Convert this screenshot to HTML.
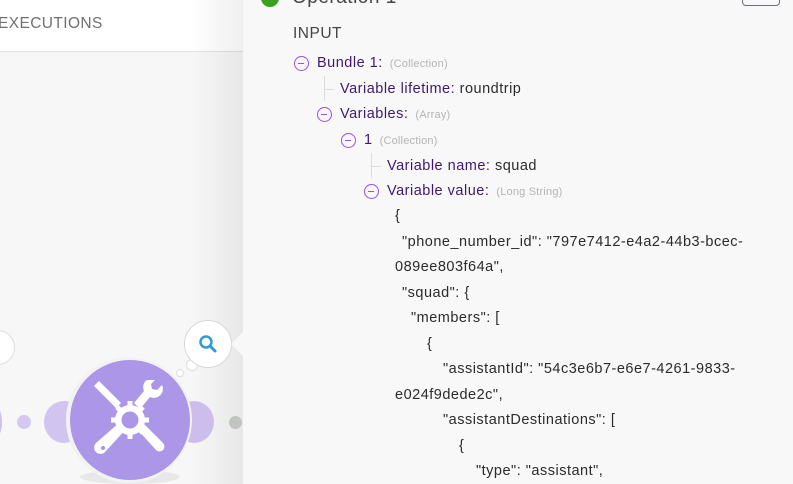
<!DOCTYPE html>
<html><head><meta charset="utf-8"><style>
*{margin:0;padding:0;box-sizing:border-box}
html,body{width:793px;height:484px;overflow:hidden}
body{position:relative;background:#f7f7f7;font-family:"Liberation Sans",sans-serif}
.hdr{position:absolute;left:0;top:0;width:260px;height:52px;background:#fff;border-bottom:1px solid #e2e2e2}
.hdr span{position:absolute;left:-2px;top:15px;font-size:15.5px;color:#707070;letter-spacing:.4px}
.shadow{position:absolute;left:190px;top:0;width:60px;height:484px;background:linear-gradient(to right,rgba(0,0,0,0),rgba(0,0,0,.07))}
.panel{position:absolute;left:243px;top:0;width:550px;height:484px;background:#f8f8f8}
.t{position:absolute;font-size:14.5px;letter-spacing:.5px;line-height:20px;color:#2b2b2b;white-space:nowrap}
.k{color:#3d1a6b}
.g{color:#b4b4b4;font-size:11px;letter-spacing:.2px;margin-left:7px}
.m{position:absolute;width:15px;height:15px;border:1.5px solid #9b4fe0;border-radius:50%}
.m:after{content:"";position:absolute;left:3px;top:5.5px;width:6px;height:1.5px;background:#9b4fe0}
.vl{position:absolute;width:1px;background:#ddd}
.hl{position:absolute;height:1px;background:#ddd}
</style></head><body>
<div class="hdr"><span>EXECUTIONS</span></div>
<div class="shadow"></div>
<div style="position:absolute;left:-20px;top:330px;width:35px;height:35px;border-radius:50%;background:#fff;border:1px solid #ddd"></div>
<div style="position:absolute;left:-20px;top:402px;width:22px;height:40px;border-radius:50%;background:#cfc0ee"></div>
<div style="position:absolute;left:17px;top:415px;width:14px;height:14px;border-radius:50%;background:#d5c8f0"></div>
<div style="position:absolute;left:44px;top:401px;width:40px;height:42px;border-radius:50%;background:#d2c4f0"></div>
<div style="position:absolute;left:174px;top:401px;width:40px;height:42px;border-radius:50%;background:#cdbdec"></div>
<div style="position:absolute;left:229px;top:416px;width:13px;height:13px;border-radius:50%;background:#c2c4c2"></div>
<div style="position:absolute;left:80px;top:470px;width:100px;height:14px;border-radius:50%;background:rgba(0,0,0,.06)"></div>
<div style="position:absolute;left:66px;top:357px;width:126px;height:126px;border-radius:50%;background:#f2f2f2"></div>
<div style="position:absolute;left:70px;top:360px;width:120px;height:120px;border-radius:50%;background:#ab96e8"></div>
<svg style="position:absolute;left:90px;top:380px" width="80" height="80" viewBox="0 0 80 80">
<g fill="#fff">
<path d="M4 6l5-5 22 22-5 5z"/>
<path d="M30 42l-24 21a6 6 0 0 0 9 9l22-24z"/>
<path d="M46 48l20 22a4.5 4.5 0 0 0 7-7l-21-21z"/>
<path d="M48 30l10-12a9 9 0 0 0 12-12l-5 5-5-1-1-5 5-5a9 9 0 0 0-12 12l-10 12z" transform="translate(2,-1)"/>
<circle cx="40" cy="40" r="15"/>
<g stroke="#fff" stroke-width="5"><path d="M40 21v38M21 40h38M27 27l26 26M53 27L27 53"/></g>
</g>
<circle cx="40" cy="40" r="8.5" fill="#ab96e8"/>
<circle cx="13" cy="68" r="2" fill="#ab96e8"/>
</svg>
<div style="position:absolute;left:176px;top:369px;width:8px;height:8px;border-radius:50%;background:#fff;border:1px solid #ddd"></div>
<div style="position:absolute;left:186px;top:359px;width:12px;height:12px;border-radius:50%;background:#fff;border:1px solid #ddd"></div>
<div style="position:absolute;left:184px;top:320px;width:48px;height:48px;border-radius:50%;background:#fff;border:1px solid #d8d8d8"></div>
<svg style="position:absolute;left:196px;top:332px" width="24" height="24" viewBox="0 0 24 24"><circle cx="10" cy="10" r="5.5" fill="none" stroke="#2f9bd6" stroke-width="2.5"/><path d="M14 14l5 5" stroke="#2f9bd6" stroke-width="3" stroke-linecap="round"/></svg>
<div class="panel"></div>
<div style="position:absolute;left:243px;top:332px;width:0;height:0;border-top:12px solid transparent;border-bottom:12px solid transparent;border-right:12px solid #f8f8f8;margin-left:-12px"></div>
<div style="position:absolute;left:261px;top:-11px;width:18px;height:18px;border-radius:50%;background:#3aa01d"></div>
<div class="t" style="left:292px;top:-12px;font-size:19px;color:#444">Operation 1</div>
<div style="position:absolute;left:742px;top:-10px;width:38px;height:16px;border:1px solid #6a6f78;border-radius:4px"></div>
<div class="t" style="left:293px;top:24px;font-size:15.5px;color:#444">INPUT</div>
<div class="m" style="left:294px;top:56px"></div>
<div class="t" style="left:317px;top:53px"><span class="k">Bundle 1:</span><span class="g">(Collection)</span></div>
<div class="vl" style="left:324px;top:76px;height:25px"></div><div class="hl" style="left:324px;top:89px;width:10px"></div>
<div class="t" style="left:340px;top:79px"><span class="k">Variable lifetime:</span> roundtrip</div>
<div class="m" style="left:317px;top:107px"></div>
<div class="t" style="left:340px;top:104px"><span class="k">Variables:</span><span class="g">(Array)</span></div>
<div class="m" style="left:341px;top:133px"></div>
<div class="t" style="left:364px;top:130px"><span class="k">1</span><span class="g">(Collection)</span></div>
<div class="vl" style="left:371px;top:153px;height:25px"></div><div class="hl" style="left:371px;top:166px;width:10px"></div>
<div class="t" style="left:387px;top:156px"><span class="k">Variable name:</span> squad</div>
<div class="m" style="left:364px;top:184px"></div>
<div class="t" style="left:387px;top:181px"><span class="k">Variable value:</span><span class="g">(Long String)</span></div>
<div class="t" style="left:395px;top:206px">{</div>
<div class="t" style="left:402px;top:232px">"phone_number_id": "797e7412-e4a2-44b3-bcec-</div>
<div class="t" style="left:395px;top:257px">089ee803f64a",</div>
<div class="t" style="left:402px;top:283px">"squad": {</div>
<div class="t" style="left:411px;top:308px">"members": [</div>
<div class="t" style="left:427px;top:334px">{</div>
<div class="t" style="left:443px;top:359px">"assistantId": "54c3e6b7-e6e7-4261-9833-</div>
<div class="t" style="left:395px;top:385px">e024f9dede2c",</div>
<div class="t" style="left:443px;top:410px">"assistantDestinations": [</div>
<div class="t" style="left:459px;top:436px">{</div>
<div class="t" style="left:476px;top:461px">"type": "assistant",</div>
</body></html>
